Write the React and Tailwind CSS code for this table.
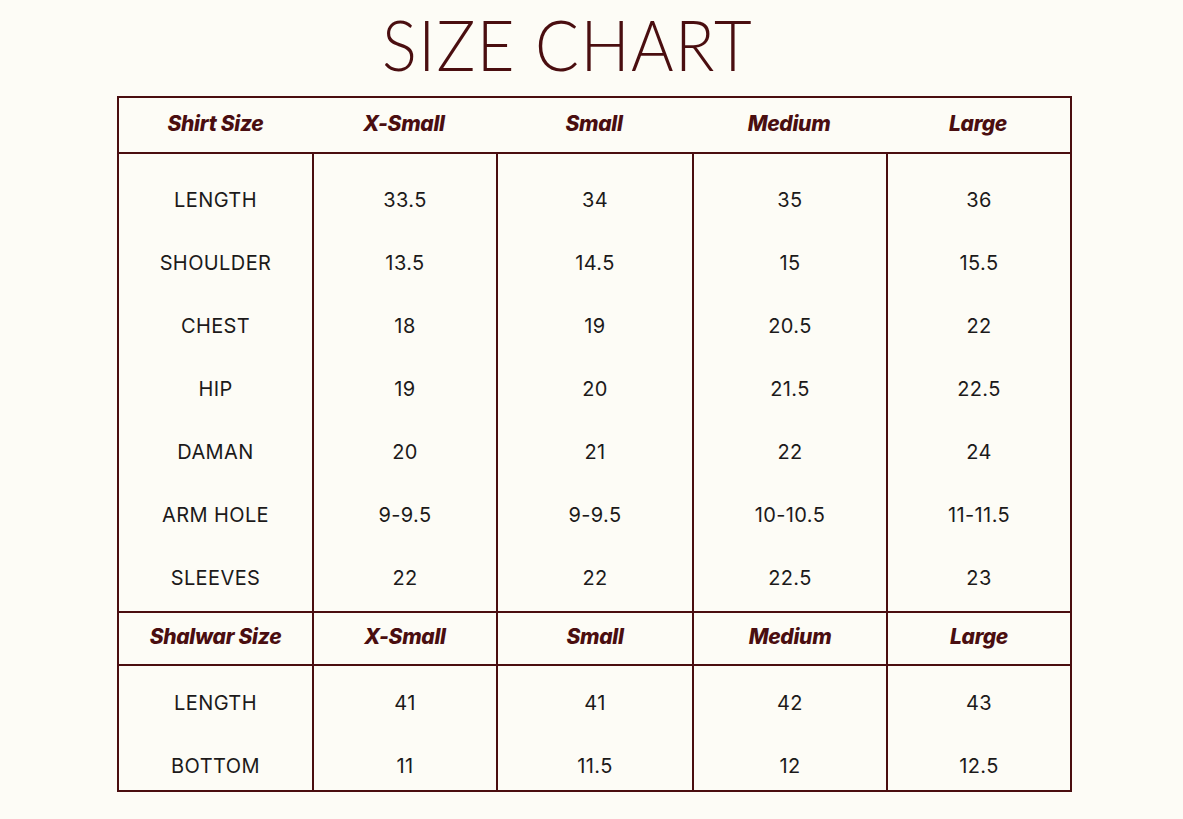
import React from "react";

const sizes = ["X-Small", "Small", "Medium", "Large"];
const shirt = [
  ["LENGTH", "33.5", "34", "35", "36"],
  ["SHOULDER", "13.5", "14.5", "15", "15.5"],
  ["CHEST", "18", "19", "20.5", "22"],
  ["HIP", "19", "20", "21.5", "22.5"],
  ["DAMAN", "20", "21", "22", "24"],
  ["ARM HOLE", "9-9.5", "9-9.5", "10-10.5", "11-11.5"],
  ["SLEEVES", "22", "22", "22.5", "23"],
];
const shalwar = [
  ["LENGTH", "41", "41", "42", "43"],
  ["BOTTOM", "11", "11.5", "12", "12.5"],
];

const cols = "grid grid-cols-[193px_184px_196px_194px_184px]";
const headFont = {
  fontFamily: "Inter, 'Open Sans', sans-serif",
};
const bodyFont = {
  fontFamily: "Inter, 'Liberation Sans', sans-serif",
};

function HeaderRow({ label, divided, height }) {
  const cells = [label, ...sizes];
  return (
    <div className={`${cols} ${height}`}>
      {cells.map((c, i) => (
        <div
          key={i}
          className={`flex items-center justify-center pb-[3px] text-[21px] font-extrabold italic tracking-[-0.3px] text-[#4a0e10] ${
            divided && i > 0 ? "border-l-2 border-[#4a0e10]" : ""
          }`}
          style={headFont}
        >
          {c}
        </div>
      ))}
    </div>
  );
}

function BodySection({ rows, rowsClass, pt }) {
  return (
    <div className={`${cols} ${rowsClass}`}>
      {[0, 1, 2, 3, 4].map((ci) => (
        <div
          key={ci}
          className={`flex min-h-0 flex-col ${pt} ${ci > 0 ? "border-l-2 border-[#4a0e10]" : ""}`}
        >
          {rows.map((r, ri) => (
            <div
              key={ri}
              className="flex h-[63px] shrink-0 items-center justify-center text-[20px] tracking-[0.4px] text-[#1c1a1a]"
              style={bodyFont}
            >
              {r[ci]}
            </div>
          ))}
        </div>
      ))}
    </div>
  );
}

export default function App() {
  return (
    <div className="min-h-[819px] w-[1183px] bg-[#fdfcf6]">
      <div className="flex h-[96px] items-start pl-[382px] pt-[9px]">
        <h1
          className="text-[70px] font-light leading-none tracking-[1.5px] text-[#4a0e10]"
          style={{ fontFamily: "Lato, 'Noto Sans', sans-serif", transform: "scaleX(0.93)", transformOrigin: "left" }}
        >
          SIZE CHART
        </h1>
      </div>
      <div className="ml-[117px] w-[955px] border-2 border-[#4a0e10]">
        <HeaderRow label="Shirt Size" divided={false} height="h-[54px]" />
        <div className="border-t-2 border-[#4a0e10]">
          <BodySection rows={shirt} rowsClass="grid-rows-[457px]" pt="pt-[14px]" />
        </div>
        <div className="border-t-2 border-[#4a0e10]">
          <HeaderRow label="Shalwar Size" divided={true} height="h-[51px]" />
        </div>
        <div className="border-t-2 border-[#4a0e10]">
          <BodySection rows={shalwar} rowsClass="grid-rows-[124px]" pt="pt-[5px]" />
        </div>
      </div>
    </div>
  );
}
